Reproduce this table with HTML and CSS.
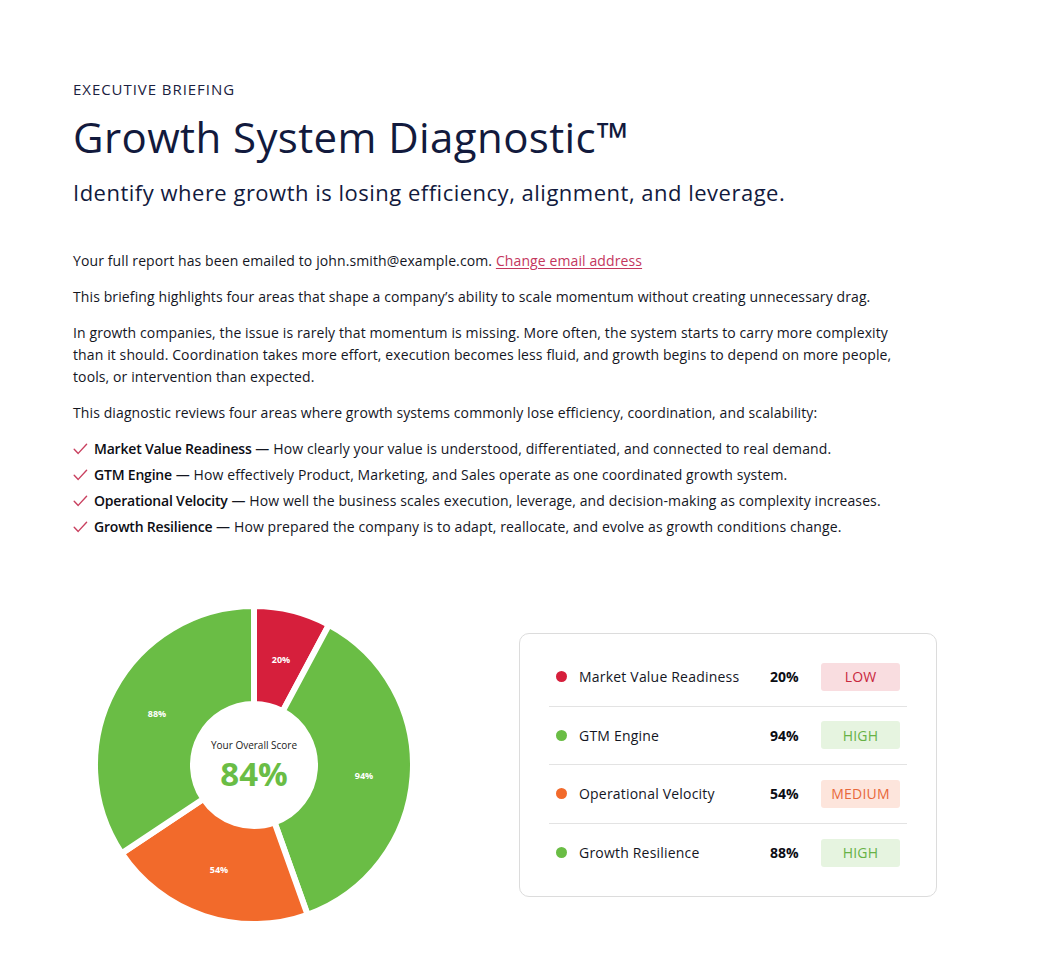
FILE: index.html
```html
<!DOCTYPE html>
<html lang="en">
<head>
<meta charset="utf-8">
<title>Growth System Diagnostic</title>
<link rel="stylesheet" href="styles.css">
</head>
<body>
<main class="page">
  <header class="intro">
    <p class="eyebrow">EXECUTIVE BRIEFING</p>
    <h1 class="title">Growth System Diagnostic™</h1>
    <p class="subtitle">Identify where growth is losing efficiency, alignment, and leverage.</p>
  </header>

  <section class="copy">
    <p>Your full report has been emailed to john.smith@example.com. <a class="link" href="#">Change email address</a></p>
    <p>This briefing highlights four areas that shape a company’s ability to scale momentum without creating unnecessary drag.</p>
    <p>In growth companies, the issue is rarely that momentum is missing. More often, the system starts to carry more complexity than it should. Coordination takes more effort, execution becomes less fluid, and growth begins to depend on more people, tools, or intervention than expected.</p>
    <p class="lead-in">This diagnostic reviews four areas where growth systems commonly lose efficiency, coordination, and scalability:</p>
    <ul class="checks">
      <li><svg class="check" width="15" height="12" viewBox="0 0 15 12"><path d="M1.2 6.2 L5.2 10.4 L13.6 1.2" fill="none" stroke="#c9405f" stroke-width="1.4" stroke-linecap="round" stroke-linejoin="round"/></svg><span><strong>Market Value Readiness</strong> — How clearly your value is understood, differentiated, and connected to real demand.</span></li>
      <li><svg class="check" width="15" height="12" viewBox="0 0 15 12"><path d="M1.2 6.2 L5.2 10.4 L13.6 1.2" fill="none" stroke="#c9405f" stroke-width="1.4" stroke-linecap="round" stroke-linejoin="round"/></svg><span><strong>GTM Engine</strong> — How effectively Product, Marketing, and Sales operate as one coordinated growth system.</span></li>
      <li><svg class="check" width="15" height="12" viewBox="0 0 15 12"><path d="M1.2 6.2 L5.2 10.4 L13.6 1.2" fill="none" stroke="#c9405f" stroke-width="1.4" stroke-linecap="round" stroke-linejoin="round"/></svg><span><strong>Operational Velocity</strong> — How well the business scales execution, leverage, and decision-making as complexity increases.</span></li>
      <li><svg class="check" width="15" height="12" viewBox="0 0 15 12"><path d="M1.2 6.2 L5.2 10.4 L13.6 1.2" fill="none" stroke="#c9405f" stroke-width="1.4" stroke-linecap="round" stroke-linejoin="round"/></svg><span><strong>Growth Resilience</strong> — How prepared the company is to adapt, reallocate, and evolve as growth conditions change.</span></li>
    </ul>
  </section>

  <section class="results">
    <div class="chart">
      <svg class="pie" width="320" height="320" viewBox="0 0 320 320">
        <g stroke="#ffffff" stroke-width="6" stroke-linejoin="miter">
          <path fill="#d61f3c" d="M160,1 A159,159 0 0 1 234.95,19.78 L188.76,106.2 A61,61 0 0 0 160,99 Z"/>
          <path fill="#6abd45" d="M234.95,19.78 A159,159 0 0 1 213.57,309.7 L180.55,217.43 A61,61 0 0 0 188.76,106.2 Z"/>
          <path fill="#f26a2b" d="M213.57,309.7 A159,159 0 0 1 27.79,248.34 L109.28,193.89 A61,61 0 0 0 180.55,217.43 Z"/>
          <path fill="#6abd45" d="M27.79,248.34 A159,159 0 0 1 160,1 L160,99 A61,61 0 0 0 109.28,193.89 Z"/>
        </g>
        <g class="pie-labels" fill="#ffffff" text-anchor="middle" dominant-baseline="central">
          <text x="187" y="54">20%</text>
          <text x="270" y="170">94%</text>
          <text x="125" y="264">54%</text>
          <text x="63" y="108">88%</text>
        </g>
      </svg>
      <div class="score">
        <span class="score-label">Your Overall Score</span>
        <span class="score-value">84%</span>
      </div>
    </div>

    <div class="card">
      <div class="row">
        <span class="dot dot-red"></span>
        <span class="name">Market Value Readiness</span>
        <span class="pct">20%</span>
        <span class="badge badge-low">LOW</span>
      </div>
      <div class="row">
        <span class="dot dot-green"></span>
        <span class="name">GTM Engine</span>
        <span class="pct">94%</span>
        <span class="badge badge-high">HIGH</span>
      </div>
      <div class="row">
        <span class="dot dot-orange"></span>
        <span class="name">Operational Velocity</span>
        <span class="pct">54%</span>
        <span class="badge badge-medium">MEDIUM</span>
      </div>
      <div class="row">
        <span class="dot dot-green"></span>
        <span class="name">Growth Resilience</span>
        <span class="pct">88%</span>
        <span class="badge badge-high">HIGH</span>
      </div>
    </div>
  </section>
</main>
</body>
</html>
```

FILE: styles.css
```css
* { box-sizing: border-box; }

html, body {
  margin: 0;
  padding: 0;
  background: #ffffff;
}

body {
  font-family: "Open Sans", "Noto Sans", sans-serif;
  color: #14161f;
}

.page {
  padding: 79px 73px 40px;
}

.intro p, .intro h1 { margin: 0; }

.eyebrow {
  font-size: 15px;
  line-height: 20px;
  color: #1b2140;
  letter-spacing: 0.95px;
}

.title {
  margin-top: 12px !important;
  font-size: 42px;
  line-height: 52px;
  font-weight: 400;
  color: #121a3d;
  letter-spacing: 0.4px;
}

.subtitle {
  margin-top: 14px !important;
  font-size: 22px;
  line-height: 30px;
  color: #121a3d;
  letter-spacing: 0.5px;
}

.copy {
  margin-top: 43px;
  max-width: 832px;
  font-size: 14px;
  line-height: 22px;
  letter-spacing: 0.11px;
}

.copy p {
  margin: 0 0 14px;
}

.copy .lead-in {
  margin-bottom: 12px;
}

.link {
  color: #c4365d;
  text-decoration: underline;
  text-underline-offset: 2px;
}

.checks {
  list-style: none;
  margin: 0;
  padding: 0;
}

.checks li {
  display: flex;
  align-items: center;
  gap: 6px;
  line-height: 26px;
}

.check {
  flex: none;
  display: block;
  margin-top: -1px;
}

.checks strong {
  font-weight: 600;
  color: #0c0d14;
  letter-spacing: -0.2px;
}

/* results */
.results {
  margin-top: 65px;
  display: flex;
  align-items: center;
}

.chart {
  position: relative;
  width: 320px;
  height: 320px;
  margin-left: 21px;
  flex: none;
}

.pie { display: block; }

.pie-labels {
  font-family: "Open Sans", sans-serif;
  font-size: 9px;
  font-weight: 700;
}

.score {
  position: absolute;
  left: 50%;
  top: 50%;
  transform: translate(-50%, -50%);
  display: flex;
  flex-direction: column;
  align-items: center;
  margin-top: 2px;
}

.score-label {
  font-size: 10px;
  color: #1a1a1a;
  line-height: 14px;
}

.score-value {
  font-size: 33px;
  font-weight: 700;
  color: #6abd45;
  line-height: 44px;
}

.card {
  margin-left: 105px;
  width: 418px;
  border: 1px solid #dcdcdc;
  border-radius: 10px;
  padding: 14px 29px;
}

.row {
  display: flex;
  align-items: center;
  height: 58.5px;
  border-bottom: 1px solid #e3e3e3;
  font-size: 14px;
  letter-spacing: 0.2px;
}

.row:last-child { border-bottom: none; }

.dot {
  width: 11px;
  height: 11px;
  border-radius: 50%;
  margin-left: 7px;
  margin-right: 12px;
  flex: none;
}

.dot-red { background: #d61f3c; }
.dot-green { background: #6abd45; }
.dot-orange { background: #f26a2b; }

.name {
  flex: 1;
  color: #14161f;
}

.pct {
  font-weight: 700;
  width: 51px;
  color: #0c0d14;
  letter-spacing: 0;
}

.badge {
  width: 79px;
  height: 28px;
  display: flex;
  align-items: center;
  justify-content: center;
  border-radius: 3px;
  font-size: 14px;
  margin-right: 7px;
}

.badge-low { background: #f9dde0; color: #c8283e; }
.badge-high { background: #e6f4e0; color: #67b246; }
.badge-medium { background: #fde5dc; color: #e8683a; }
```
